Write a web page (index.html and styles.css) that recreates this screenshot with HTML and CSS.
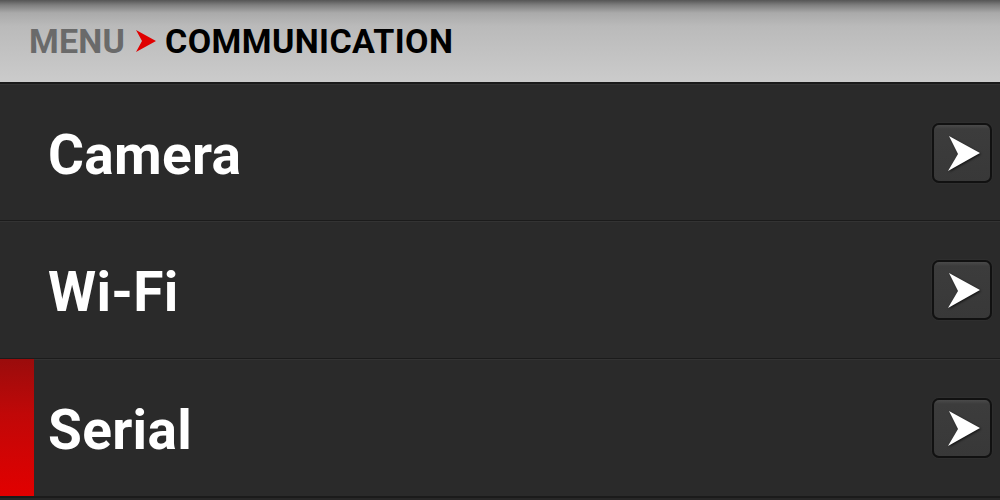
FILE: index.html
```html
<!DOCTYPE html>
<html>
<head>
<meta charset="utf-8">
<link rel="stylesheet" href="styles.css">
</head>
<body>
<div class="screen">
  <header class="crumb">
    <span class="crumb-root">MENU</span>
    <svg class="crumb-sep" width="22" height="24" viewBox="0 0 22 24"><path d="M1 1 L21 12 L1 23 L7 12 Z" fill="#e00000"/></svg>
    <span class="crumb-current">COMMUNICATION</span>
  </header>
  <div class="list">
    <div class="row">
      <span class="label">Camera</span>
      <span class="go"><svg width="36" height="40" viewBox="0 0 36 40"><path d="M4 3 L35 20 L3 38 L13 21 Z" fill="#fff"/></svg></span>
    </div>
    <div class="row">
      <span class="label">Wi-Fi</span>
      <span class="go"><svg width="36" height="40" viewBox="0 0 36 40"><path d="M4 3 L35 20 L3 38 L13 21 Z" fill="#fff"/></svg></span>
    </div>
    <div class="row active">
      <span class="label">Serial</span>
      <span class="go"><svg width="36" height="40" viewBox="0 0 36 40"><path d="M4 3 L35 20 L3 38 L13 21 Z" fill="#fff"/></svg></span>
    </div>
  </div>
</div>
</body>
</html>
```
FILE: styles.css
```css
html, body {
  margin: 0;
  padding: 0;
  background: #272727;
}
.screen {
  width: 1000px;
  height: 500px;
  overflow: hidden;
  font-family: Roboto, "Liberation Sans", sans-serif;
}
.crumb {
  box-sizing: border-box;
  height: 84px;
  display: flex;
  align-items: center;
  padding: 0 0 0 29px;
  gap: 8px;
  background: linear-gradient(to bottom, #555 0px, #7e7e7e 5px, #aaa 13px, #bababa 26px, #c3c3c3 55px, #cbcbcb 82px);
  border-bottom: 2px solid #1a1a1a;
}
.crumb-root {
  font-weight: 700;
  font-size: 34px;
  color: #6a6a6a;
  letter-spacing: 0.2px;
}
.crumb-sep {
  display: block;
  margin-left: 2px;
}
.crumb-current {
  font-weight: 700;
  font-size: 34px;
  color: #000;
  letter-spacing: 0.4px;
}
.list {
  display: flex;
  flex-direction: column;
}
.row {
  position: relative;
  height: 136px;
  display: flex;
  align-items: center;
  justify-content: space-between;
  padding: 0 8px 0 48px;
  background: #2a2a2a;
  border-top: 1px solid #333;
  border-bottom: 2px solid #1b1b1b;
  box-sizing: content-box;
  margin-top: -1px;
}
.row:first-child {
  margin-top: 0;
  height: 135px;
}
.row.active::before {
  content: "";
  position: absolute;
  left: 0;
  top: -1px;
  bottom: 0;
  width: 34px;
  background: linear-gradient(to bottom, #9a0c0c 0%, #c00808 40%, #e20000 100%);
}
.label {
  font-weight: 700;
  font-size: 55px;
  color: #fff;
  letter-spacing: 0.3px;
  margin-top: 4px;
}
.go {
  width: 56px;
  height: 56px;
  border: 2px solid #111;
  border-radius: 7px;
  background: linear-gradient(to bottom, #4a4a4a 0px, #3c3c3c 4px, #383838 100%);
  box-shadow: 0 0 0 1px #2e2e2e;
  display: flex;
  align-items: center;
  justify-content: center;
}
.go svg {
  display: block;
  margin-left: 2px;
  filter: drop-shadow(1px 1px 1px rgba(0,0,0,0.7));
}
```
